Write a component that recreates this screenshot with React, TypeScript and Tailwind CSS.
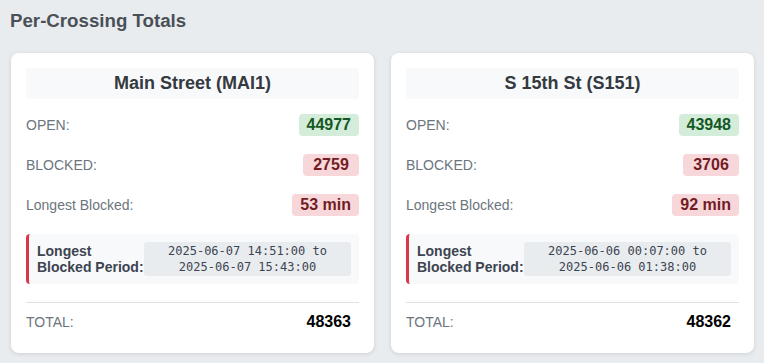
const crossings = [
  {
    name: 'Main Street (MAI1)',
    open: 44977,
    blocked: 2759,
    longest: '53 min',
    from: '2025-06-07 14:51:00',
    to: '2025-06-07 15:43:00',
    total: 48363,
  },
  {
    name: 'S 15th St (S151)',
    open: 43948,
    blocked: 3706,
    longest: '92 min',
    from: '2025-06-06 00:07:00',
    to: '2025-06-06 01:38:00',
    total: 48362,
  },
];

type Crossing = (typeof crossings)[number];

const StatRow = ({ label, value, tone }: { label: string; value: string | number; tone: 'green' | 'red' }) => (
  <div className="flex items-center justify-between h-[22px] mb-[18px]">
    <span className="text-[14px] text-[#6c757d]">{label}</span>
    <span
      className={`h-[22px] min-w-[56px] px-[8px] flex items-center justify-center rounded-[4px] text-[16px] font-bold ${
        tone === 'green' ? 'bg-[#d4edda] text-[#155724]' : 'bg-[#f8d7da] text-[#721c24]'
      }`}
    >
      {value}
    </span>
  </div>
);

const CrossingCard = ({ c }: { c: Crossing }) => (
  <div className="bg-white rounded-[8px] shadow-[0_1px_4px_rgba(0,0,0,0.12)] px-[15px] pt-[15px] pb-[20px]">
    {/* header */}
    <div className="h-[31px] bg-[#f8f9fa] rounded-[4px] flex items-center justify-center text-[18px] font-bold text-[#343a40] mb-[15px]">
      {c.name}
    </div>

    <StatRow label="OPEN:" value={c.open} tone="green" />
    <StatRow label="BLOCKED:" value={c.blocked} tone="red" />
    <StatRow label="Longest Blocked:" value={c.longest} tone="red" />

    {/* longest blocked period */}
    <div className="bg-[#f8f9fa] rounded-[4px] border-l-[3px] border-[#dc3545] flex items-center p-[8px]">
      <div className="w-[107px] shrink-0 text-[14px] font-bold leading-[16px] text-[#3d4451]">
        Longest Blocked Period:
      </div>
      <div className="flex-1 h-[34px] bg-[#e9ecef] rounded-[3px] flex flex-col items-center justify-center font-['DejaVu_Sans_Mono',monospace] text-[12px] leading-[16px] text-[#3d4451]">
        <span>{c.from} to</span>
        <span>{c.to}</span>
      </div>
    </div>

    <div className="mt-[18px] border-t border-[#dee2e6] pt-[8px]">
      <div className="flex items-center justify-between h-[22px]">
        <span className="text-[14px] text-[#6c757d]">TOTAL:</span>
        <span className="px-[8px] text-[16px] font-bold text-black">{c.total}</span>
      </div>
    </div>
  </div>
);

export default function App() {
  return (
    <div className="min-h-screen bg-[#e9ecef] font-['Liberation_Sans',Arial,sans-serif] pt-[10px] pl-[11px] pr-[10px]">
      <h2 className="text-[18.7px] font-bold leading-[21px] text-[#495057] mb-[22px] -ml-[1px]">Per-Crossing Totals</h2>
      <div className="grid grid-cols-2 gap-[17px]">
        {crossings.map((c) => (
          <CrossingCard key={c.name} c={c} />
        ))}
      </div>
    </div>
  );
}
